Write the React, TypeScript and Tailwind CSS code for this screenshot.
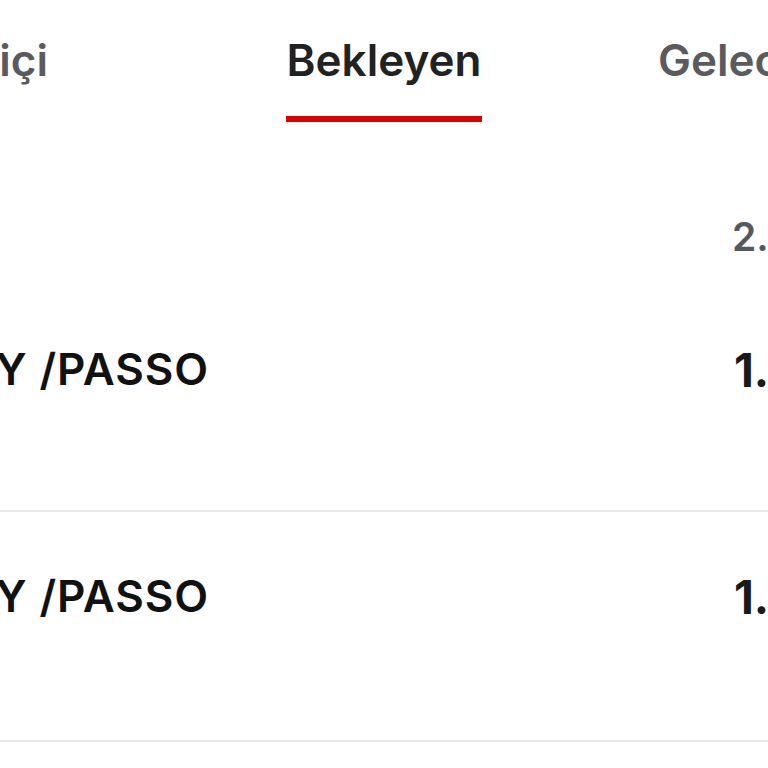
import React from "react";

export default function App() {
  return (
    <div className="w-[768px] h-[768px] overflow-hidden bg-white font-['Inter','Noto_Sans',sans-serif]">
      {/* Tabs */}
      <div className="grid grid-cols-[286px_196px_286px] h-[122px]">
        <div className="flex justify-end pr-[238px] pt-[38px]">
          <span className="shrink-0 whitespace-nowrap text-[44px] leading-none font-semibold text-[#5a5a5f]">
            Maç içi
          </span>
        </div>
        <div className="flex flex-col items-center">
          <span className="mt-[38px] whitespace-nowrap text-[44px] leading-none font-semibold text-[#222222]">
            Bekleyen
          </span>
          <div className="mt-auto h-[6px] w-full bg-[#dc0000]" />
        </div>
        <div className="flex pl-[176px] pt-[38px]">
          <span className="shrink-0 whitespace-nowrap text-[44px] leading-none font-semibold text-[#5a5a5f]">
            Gelecek
          </span>
        </div>
      </div>

      {/* Row 1 */}
      <div className="flex h-[390px] flex-col border-b-2 border-[#e8e8e8] pt-[95px]">
        <div className="flex">
          <div className="flex-1" />
          <span className="w-[36px] shrink-0 whitespace-nowrap text-[39px] leading-none font-semibold text-[#55595f]">
            2.450,00 TL
          </span>
        </div>
        <div className="mt-[91px] flex items-start">
          <div className="flex w-[209px] shrink-0 justify-end">
            <span className="shrink-0 whitespace-nowrap text-[44px] leading-none font-semibold tracking-[0.9px] text-[#111111]">
              GÜNEY /PASSO
            </span>
          </div>
          <div className="flex-1" />
          <span className="w-[34px] shrink-0 whitespace-nowrap text-[46px] leading-none font-bold text-[#1a1a1a]">
            1.250,00 TL
          </span>
        </div>
      </div>

      {/* Row 2 */}
      <div className="flex h-[230px] flex-col border-b-2 border-[#e8e8e8] pt-[62px]">
        <div className="flex items-start">
          <div className="flex w-[209px] shrink-0 justify-end">
            <span className="shrink-0 whitespace-nowrap text-[44px] leading-none font-semibold tracking-[0.9px] text-[#111111]">
              GÜNEY /PASSO
            </span>
          </div>
          <div className="flex-1" />
          <span className="w-[34px] shrink-0 whitespace-nowrap text-[46px] leading-none font-bold text-[#1a1a1a]">
            1.250,00 TL
          </span>
        </div>
      </div>
    </div>
  );
}
